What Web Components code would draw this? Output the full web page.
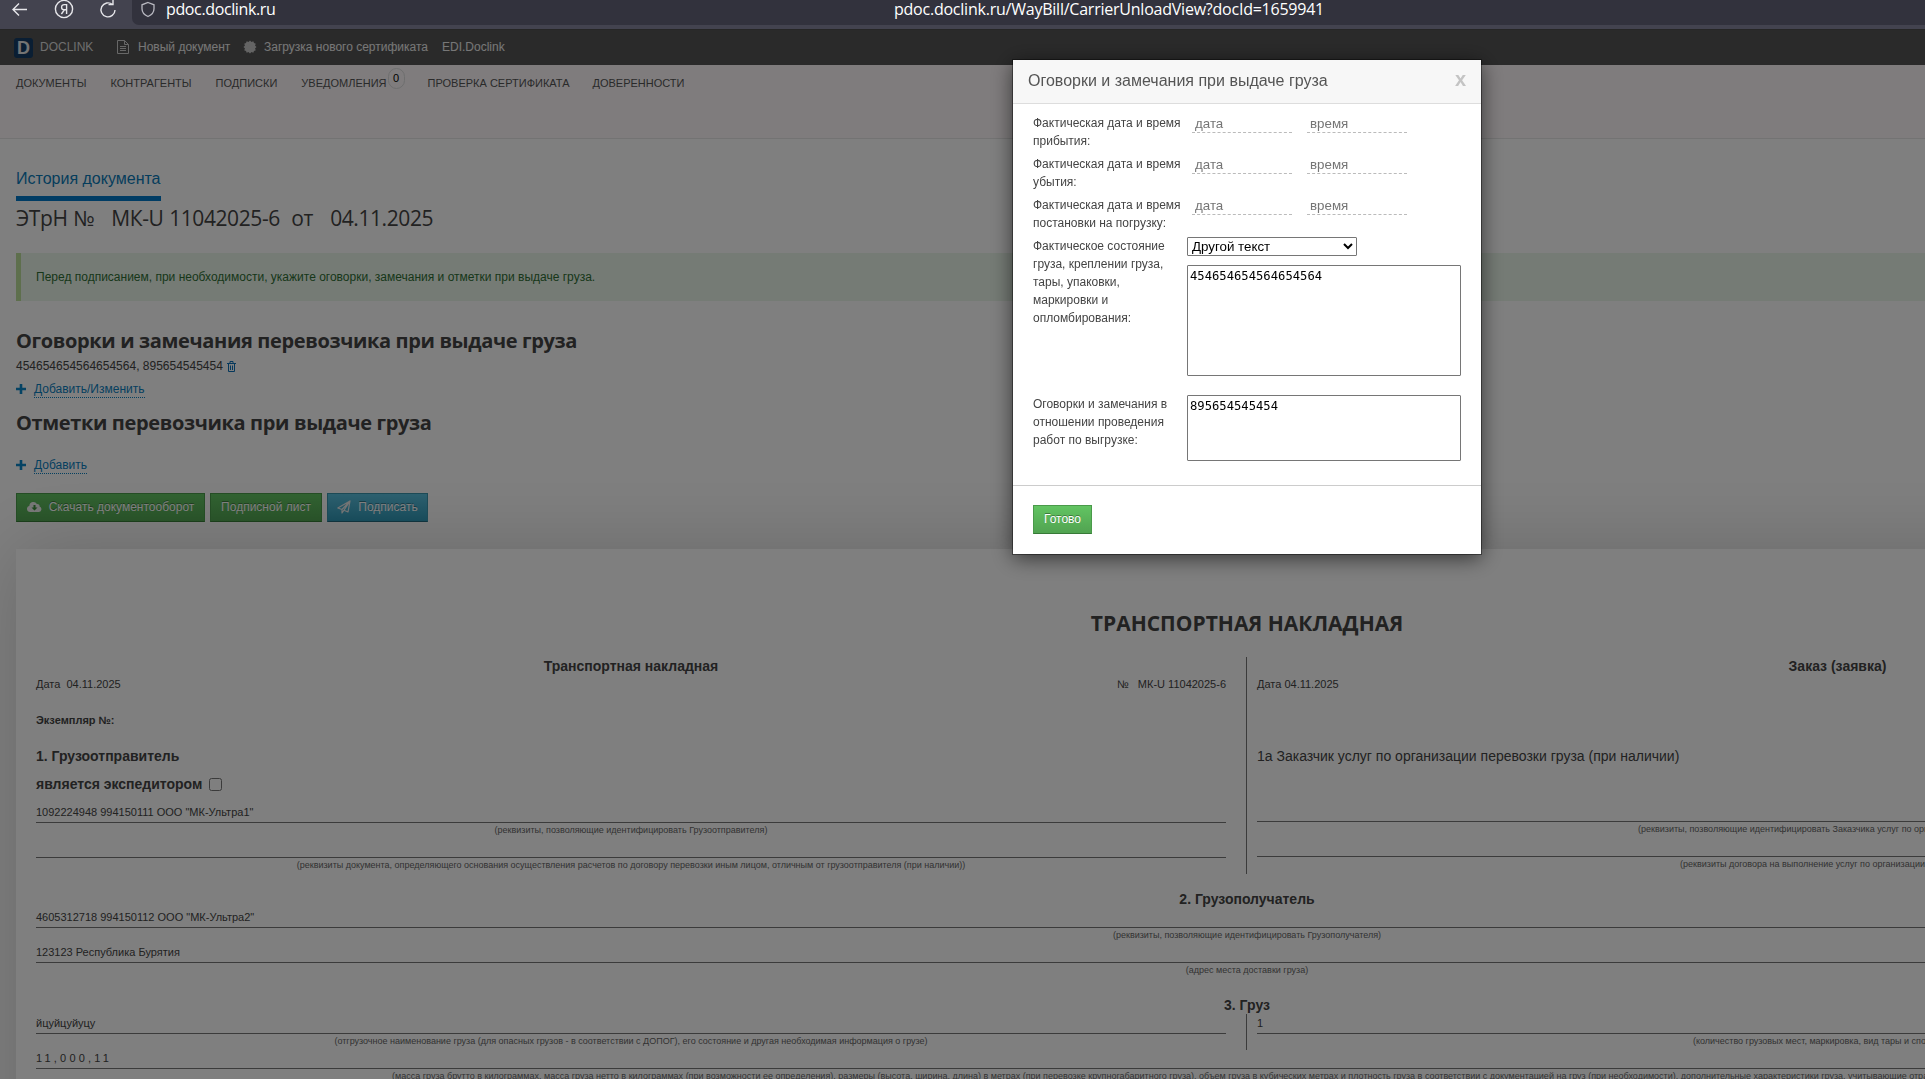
<!DOCTYPE html>
<html lang="ru">
<head>
<meta charset="utf-8">
<title>DOCLINK</title>
<style>
  html, body {
    margin: 0;
    height: 1079px;
    overflow: hidden;
    background: #fff;
    font: 12px/18px "Liberation Sans", Arial, sans-serif;
    color: #444;
  }
  waybill-app { height: 1079px; }
</style>
</head>
<body>
<waybill-app></waybill-app>

<script>
const define = (name, html, setup) => {
  const template = document.createElement("template");
  template.innerHTML = html;
  customElements.define(name, class extends HTMLElement {
    constructor() {
      super();
      this.attachShadow({ mode: "open" });
      this.shadowRoot.append(template.content.cloneNode(true));
    }

    connectedCallback() {
      if (setup) setup(this, this.shadowRoot);
    }
  });
};

/* ---------- browser bar ---------- */
define("browser-bar", /*html*/ `
  <style>
    :host {
      display: flex;
      height: 29px;
      background: #43434f;
      color: #fff;
      font: 16px/18px "Open Sans", "Noto Sans", sans-serif;
    }
    .tools { width: 132px; flex: none; height: 25px; }
    svg { display: block; fill: none; stroke: #e6e6ea; }
    .url {
      flex: 1;
      height: 25px;
      display: grid;
      grid-template-columns: 34px 728px 1fr;
      background: #32323d;
      border-bottom-left-radius: 7px;
    }
    span { white-space: nowrap; letter-spacing: -0.37px; }
    .full { letter-spacing: -0.23px; }
  </style>
  <div class="tools">
    <svg width="132" height="25" stroke-width="1.4">
      <path d="M27 9.5H13M19 3.5l-6 6 6 6"/>
      <circle cx="64" cy="9" r="8.6"/>
      <path d="M66.6 14V4.6h-2.4a2.5 2.5 0 0 0 0 5.2h2.4M64.4 9.8L61.4 14"/>
      <path d="M112.5 4.5A7 7 0 1 0 115 10M108.5 4.6h4.500V0"/>
    </svg>
  </div>
  <div class="url">
    <svg width="34" height="25" stroke-width="1.3" style="stroke:#b8b8c0"><path d="M16 2.500l6 2.300v4c0 3.600-2.500 6.200-6 7.700-3.500-1.500-6-4.100-6-7.700v-4z"/></svg>
    <span>pdoc.doclink.ru</span>
    <span class="full">pdoc.doclink.ru/WayBill/CarrierUnloadView?docId=1659941</span>
  </div>
`);

/* ---------- dark header ---------- */
define("top-bar", /*html*/ `
  <style>
    :host {
      display: flex;
      align-items: center;
      height: 36px;
      padding-left: 14px;
      background: #555;
      box-shadow: inset 0 1px #4c4c4c;
      color: #eee;
      white-space: nowrap;
    }
    .logo {
      width: 19px;
      height: 20px;
      margin: 2px 7px 0 0;
      border-radius: 3px;
      background: #143c66;
      font: bold 18px/20px "Liberation Sans", sans-serif;
      text-align: center;
      color: #e8e8e8;
    }
    .brand { width: 77px; color: #ddd; }
    svg { display: block; flex: none; }
    .new { width: 105px; margin-left: 9px; }
    .cert { width: 178px; margin-left: 7px; }
  </style>
  <span class="logo">D</span>
  <span class="brand">DOCLINK</span>
  <svg width="12" height="14" viewBox="0 0 12 14" fill="none" stroke="#d0d0d0"><path d="M.5.500h7l4 4v9H.500zM7.500.500v4h4M3 6.500h6M3 8.500h6M3 10.500h6"/></svg>
  <span class="new">Новый документ</span>
  <svg width="14" height="14" viewBox="-7 -7 14 14" fill="#c8c8c8">
    <path d="M0-6.500L1.500-5 3.300-5.700 4-4l1.800.7L5-1.500 6.500 0 5 1.500l.8 1.800L4 4l-.7 1.700L1.500 5 0 6.500-1.500 5l-1.800.7L-4 4l-1.800-.7L-5 1.500-6.500 0-5-1.500l-.8-1.800L-4-4l.7-1.700L-1.500-5z"/>
  </svg>
  <span class="cert">Загрузка нового сертификата</span>
  <span>EDI.Doclink</span>
`);

define("main-nav", /*html*/ `
  <style>
    :host {
      display: flex;
      height: 73px;
      padding-left: 16px;
      background: #fef9fb;
      border-bottom: 1px solid #e6e6e6;
      font-size: 11px;
      line-height: 36px;
      text-transform: uppercase;
      white-space: nowrap;
      color: #555;
    }
    ::slotted(*) { margin-right: 24px; }
    ::slotted([data-last]) { margin-right: 23px; }
  </style>
  <slot></slot>
`);

define("count-badge", /*html*/ `
  <style>
    :host {
      display: inline-block;
      vertical-align: top;
      box-sizing: border-box;
      width: 17px;
      height: 21px;
      margin: 3px 0 0 1px;
      border: 1px solid #ddd;
      border-radius: 9px;
      line-height: 19px;
      text-align: center;
      color: #000;
    }
  </style>
  <slot></slot>
`);

/* ---------- small controls ---------- */
const icons = {
  plus: `<svg width="10" height="10" fill="#0a86c8"><path d="M3.700 0h2.600v3.700H10v2.600H6.300V10H3.700V6.300H0V3.700h3.700z"/></svg>`,
  trash: `<svg width="9" height="11" viewBox="0 0 9 11" fill="none" stroke="#0a70b8"><path d="M0 2.500h9M3 2V.500h3V2M1.500 3v7.500h6V3M3.500 4.500V9M5.500 4.500V9"/></svg>`,
  cloud: `<svg width="15" height="11" viewBox="0 0 15 11"><path fill="#eee" d="M3.200 11A3.200 3.200 0 0 1 2.400 4.700 4 4 0 0 1 9.900 3a2.300 2.300 0 0 1 2.700 2.600A2.800 2.800 0 0 1 12 11z"/><path fill="#3f8f3f" d="M6.500 4h2v2.500h2L7.500 9.500l-3-3h2z"/></svg>`,
  plane: `<svg width="14" height="14" viewBox="0 0 14 14" fill="none" stroke="#e8e8e8" stroke-width="1.200" stroke-linejoin="round"><path d="M.8 8L13 1l-2 11-4-1.800L5 13V9.500zM5 9.500L13 1 7 10.200"/></svg>`
};

define("x-icon", `<style>:host { display: inline-flex; }</style>`, (host, root) => {
  if (!root.querySelector("svg")) root.innerHTML += icons[host.getAttribute("name")];
});

define("action-button", /*html*/ `
  <style>
    :host {
      display: inline-flex;
      align-items: center;
      justify-content: center;
      box-sizing: border-box;
      height: 29px;
      padding-bottom: 2px;
      border: 1px solid #4a9a4a;
      border-bottom-color: #377a37;
      background: linear-gradient(#62c462, #51a351);
      color: #fff;
      text-shadow: 0 -1px 0 rgba(0, 0, 0, .35);
      white-space: nowrap;
    }
    :host([kind="info"]) {
      border-color: #3a95ad;
      border-bottom-color: #22677a;
      background: linear-gradient(#5bc0de, #2f96b4);
    }
    ::slotted(x-icon) { margin-right: 7px; }
  </style>
  <slot></slot>
`);

define("add-link", /*html*/ `
  <style>
    :host { display: flex; align-items: center; height: 18px; color: #0a80c0; }
    x-icon { margin: -2px 8px 0 0; }
    span { line-height: 15px; border-bottom: 1px dotted #0a80c0; }
  </style>
  <x-icon name="plus"></x-icon><span><slot></slot></span>
`);

/* ---------- paper form ---------- */
define("form-line", /*html*/ `
  <style>
    :host { display: block; height: 35px; white-space: nowrap; }
    .value {
      height: 18px;
      border-bottom: 1px solid #777;
      font-size: 11px;
      line-height: 16px;
      letter-spacing: var(--value-spacing, normal);
      color: #444;
    }
    .caption { text-align: center; font-size: 9px; line-height: 14px; color: #666; }
  </style>
  <div class="value"><slot></slot></div>
  <div class="caption"></div>
`, (host, root) => {
  const caption = root.querySelector(".caption");
  caption.textContent = host.getAttribute("caption") || "";
  // captions of lines that run past the window edge start at a fixed indent
  const indent = host.getAttribute("indent");
  if (indent) {
    caption.style.textAlign = "left";
    caption.style.paddingLeft = `${indent}px`;
  }
});

define("waybill-paper", /*html*/ `
  <style>
    :host {
      display: block;
      box-sizing: border-box;
      width: 2462px;
      height: 700px;
      padding: 0 20px;
      background: #fff;
      box-shadow: 0 0 75px rgba(0, 0, 0, .18);
      font-size: 11px;
      color: #444;
    }
    h1 {
      margin: 0;
      padding-top: 60px;
      height: 48px;
      font: bold 21px/28px "Open Sans", "Noto Sans", sans-serif;
      text-align: center;
    }
    h2, h3 { margin: 0; font-size: 14px; line-height: 18px; font-weight: bold; }
    h2 { text-align: center; }
    .cols { display: grid; grid-template-columns: 1210px 1172px; }
    .left { padding-right: 20px; border-right: 1px solid #777; box-sizing: border-box; width: 1211px; }
    .right { padding-left: 11px; }
    .right form-line { position: relative; }
    .row { display: flex; justify-content: space-between; height: 18px; white-space: pre; }
    .copy { margin: 18px 0; font-weight: bold; }
    .agent { display: flex; align-items: center; margin: 10px 0 11px; height: 18px; }
    .agent input { width: 13px; height: 13px; margin: 0 0 0 7px; }
    .customer { font-size: 14px; margin: 54px 0 38px; height: 18px; }
    .second { margin: 16px 0 1px; }
    .third { margin: 17px 0 0; }
    .cargo form-line { padding-top: 1px; }
    .dims { --value-spacing: 3.2px; }
  </style>
  <h1>ТРАНСПОРТНАЯ НАКЛАДНАЯ</h1>
  <div class="cols">
    <div class="left">
      <h2>Транспортная накладная</h2>
      <div class="row"><span>Дата  04.11.2025</span><span>№   МК-U 11042025-6</span></div>
      <div class="copy">Экземпляр №:</div>
      <h3>1. Грузоотправитель</h3>
      <div class="agent"><h3>является экспедитором</h3><input type="checkbox"></div>
      <form-line caption="(реквизиты, позволяющие идентифицировать Грузоотправителя)">1092224948 994150111 ООО "МК-Ультра1"</form-line>
      <form-line caption="(реквизиты документа, определяющего основания осуществления расчетов по договору перевозки иным лицом, отличным от грузоотправителя (при наличии))"></form-line>
    </div>
    <div class="right">
      <h2>Заказ (заявка)</h2>
      <div class="row">Дата 04.11.2025</div>
      <div class="customer">1а Заказчик услуг по организации перевозки груза (при наличии)</div>
      <form-line indent="381" caption="(реквизиты, позволяющие идентифицировать Заказчика услуг по организации"></form-line>
      <form-line indent="423" caption="(реквизиты договора на выполнение услуг по организации перевозки"></form-line>
    </div>
  </div>
  <h2 class="second">2. Грузополучатель</h2>
  <form-line caption="(реквизиты, позволяющие идентифицировать Грузополучателя)">4605312718 994150112 ООО "МК-Ультра2"</form-line>
  <form-line caption="(адрес места доставки груза)">123123 Республика Бурятия</form-line>
  <h2 class="third">3. Груз</h2>
  <div class="cols cargo">
    <div class="left">
      <form-line caption="(отгрузочное наименование груза (для опасных грузов - в соответствии с ДОПОГ), его состояние и другая необходимая информация о грузе)">йцуйцуйуцу</form-line>
    </div>
    <div class="right">
      <form-line indent="436" caption="(количество грузовых мест, маркировка, вид тары и способ упаковки)">1</form-line>
    </div>
  </div>
  <form-line class="dims" indent="356" caption="(масса груза брутто в килограммах, масса груза нетто в килограммах (при возможности ее определения), размеры (высота, ширина, длина) в метрах (при перевозке крупногабаритного груза), объем груза в кубических метрах и плотность груза в соответствии с документацией на груз (при необходимости), дополнительные характеристики груза, учитывающие отраслевые особенности">11,000,11</form-line>
`);

/* ---------- page content above the paper ---------- */
define("document-page", /*html*/ `
  <style>
    :host { display: block; padding-left: 16px; }
    .history {
      display: inline-block;
      margin-top: 26px;
      height: 31px;
      border-bottom: 5px solid #0078c8;
      font-size: 16px;
      line-height: 27px;
      color: #0a7ab8;
    }
    .title, h2 {
      margin: 0;
      font: 21px/28px "Open Sans", "Noto Sans", sans-serif;
      white-space: pre;
      color: #444;
    }
    .title {
      height: 52px;
      padding-top: 3px;
      box-sizing: border-box;
      letter-spacing: -0.42px;
      word-spacing: 0.7px;
    }
    h2 { font-weight: bold; font-size: 20px; letter-spacing: -0.36px; }
    .history-row { height: 62px; }
    .alert {
      height: 48px;
      line-height: 48px;
      padding-left: 15px;
      border-left: 5px solid #bcdf9b;
      background: #eaf6ea;
      color: #2f6f35;
    }
    .first { margin-top: 26px; }
    .note { display: flex; align-items: center; height: 18px; margin: 2px 0 6px; }
    .note x-icon { margin-left: 4px; }
    .second { margin: 10px 0 20px; }
    .buttons { display: flex; gap: 5px; margin: 18px 0 27px; }
  </style>
  <div class="history-row"><span class="history">История документа</span></div>
  <div class="title">ЭТрН №   МК-U 11042025-6  от   04.11.2025</div>
  <div class="alert">Перед подписанием, при необходимости, укажите оговорки, замечания и отметки при выдаче груза.</div>
  <h2 class="first">Оговорки и замечания перевозчика при выдаче груза</h2>
  <div class="note">454654654564654564, 895654545454<x-icon name="trash"></x-icon></div>
  <add-link>Добавить/Изменить</add-link>
  <h2 class="second">Отметки перевозчика при выдаче груза</h2>
  <add-link>Добавить</add-link>
  <div class="buttons">
    <action-button style="width:189px"><x-icon name="cloud"></x-icon>Скачать документооборот</action-button>
    <action-button style="width:112px">Подписной лист</action-button>
    <action-button style="width:101px" kind="info"><x-icon name="plane"></x-icon>Подписать</action-button>
  </div>
  <waybill-paper></waybill-paper>
`);

/* ---------- modal ---------- */
define("date-row", /*html*/ `
  <style>
    :host { display: grid; grid-template-columns: 159px 115px 100px; height: 41px; }
    input {
      box-sizing: border-box;
      width: 100px;
      height: 18px;
      margin: 1px 0 0;
      padding: 0 3px;
      border: 0;
      border-bottom: 1px dashed #bbb;
      background: none;
      outline: none;
      font: 13.333px/16px "Liberation Sans", Arial, sans-serif;
    }
    input::placeholder { color: #757575; }
    span { width: 150px; }
  </style>
  <span><slot></slot></span>
  <input placeholder="дата"><input placeholder="время">
`);

define("remarks-dialog", /*html*/ `
  <style>
    :host {
      display: block;
      position: fixed;
      left: 1013px;
      top: 60px;
      box-sizing: border-box;
      width: 468px;
      height: 494px;
      background: #fff;
      outline: 1px solid rgba(0, 0, 0, .4);
      box-shadow: 0 4px 20px rgba(0, 0, 0, .6);
      color: #444;
    }
    header {
      display: flex;
      justify-content: space-between;
      height: 43px;
      padding: 0 15px;
      border-bottom: 1px solid #ddd;
      background: #f7f7f7;
      font-size: 16px;
      line-height: 41px;
      color: #555;
    }
    header b { font-size: 20px; line-height: 39px; color: #c4c4c4; }
    .body { height: 381px; box-sizing: border-box; padding: 10px 20px 0; }
    .field { display: grid; grid-template-columns: 154px 274px; }
    .field > span { width: 134px; }
    .state { height: 158px; }
    .work > span { width: 142px; }
    select {
      display: block;
      width: 170px;
      height: 19px;
      margin-bottom: 9px;
      padding: 0;
      border: 1px solid #767676;
      border-radius: 1px;
      background: #fff;
      color: #000;
      font: 13.333px "Liberation Sans", Arial, sans-serif;
    }
    textarea {
      display: block;
      box-sizing: border-box;
      width: 274px;
      padding: 2px;
      border: 1px solid #767676;
      border-radius: 1px;
      resize: none;
      color: #000;
      font: 12.2px/16px "DejaVu Sans Mono", monospace;
    }
    footer { border-top: 1px solid #ccc; padding: 19px 20px; }
    action-button { width: 59px; }
  </style>
  <header>Оговорки и замечания при выдаче груза<b>x</b></header>
  <div class="body">
    <date-row>Фактическая дата и время прибытия:</date-row>
    <date-row>Фактическая дата и время убытия:</date-row>
    <date-row>Фактическая дата и время постановки на погрузку:</date-row>
    <div class="field state">
      <span>Фактическое состояние груза, креплении груза, тары, упаковки, маркировки и опломбирования:</span>
      <div>
        <select><option>Другой текст</option></select>
        <textarea style="height:111px">454654654564654564</textarea>
      </div>
    </div>
    <div class="field work">
      <span>Оговорки и замечания в отношении проведения работ по выгрузке:</span>
      <textarea style="height:66px">895654545454</textarea>
    </div>
  </div>
  <footer><action-button>Готово</action-button></footer>
`);

define("waybill-app", /*html*/ `
  <style>
    :host { display: block; overflow: hidden; }
    .shade {
      position: fixed;
      inset: 29px 0 0 0;
      background: rgba(0, 0, 0, .5);
    }
  </style>
  <browser-bar></browser-bar>
  <top-bar></top-bar>
  <main-nav>
    <span>Документы</span>
    <span>Контрагенты</span>
    <span>Подписки</span>
    <span data-last>Уведомления<count-badge>0</count-badge></span>
    <span data-last>Проверка сертификата</span>
    <span>Доверенности</span>
  </main-nav>
  <document-page></document-page>
  <div class="shade"></div>
  <remarks-dialog></remarks-dialog>
`);
</script>
</body>
</html>
